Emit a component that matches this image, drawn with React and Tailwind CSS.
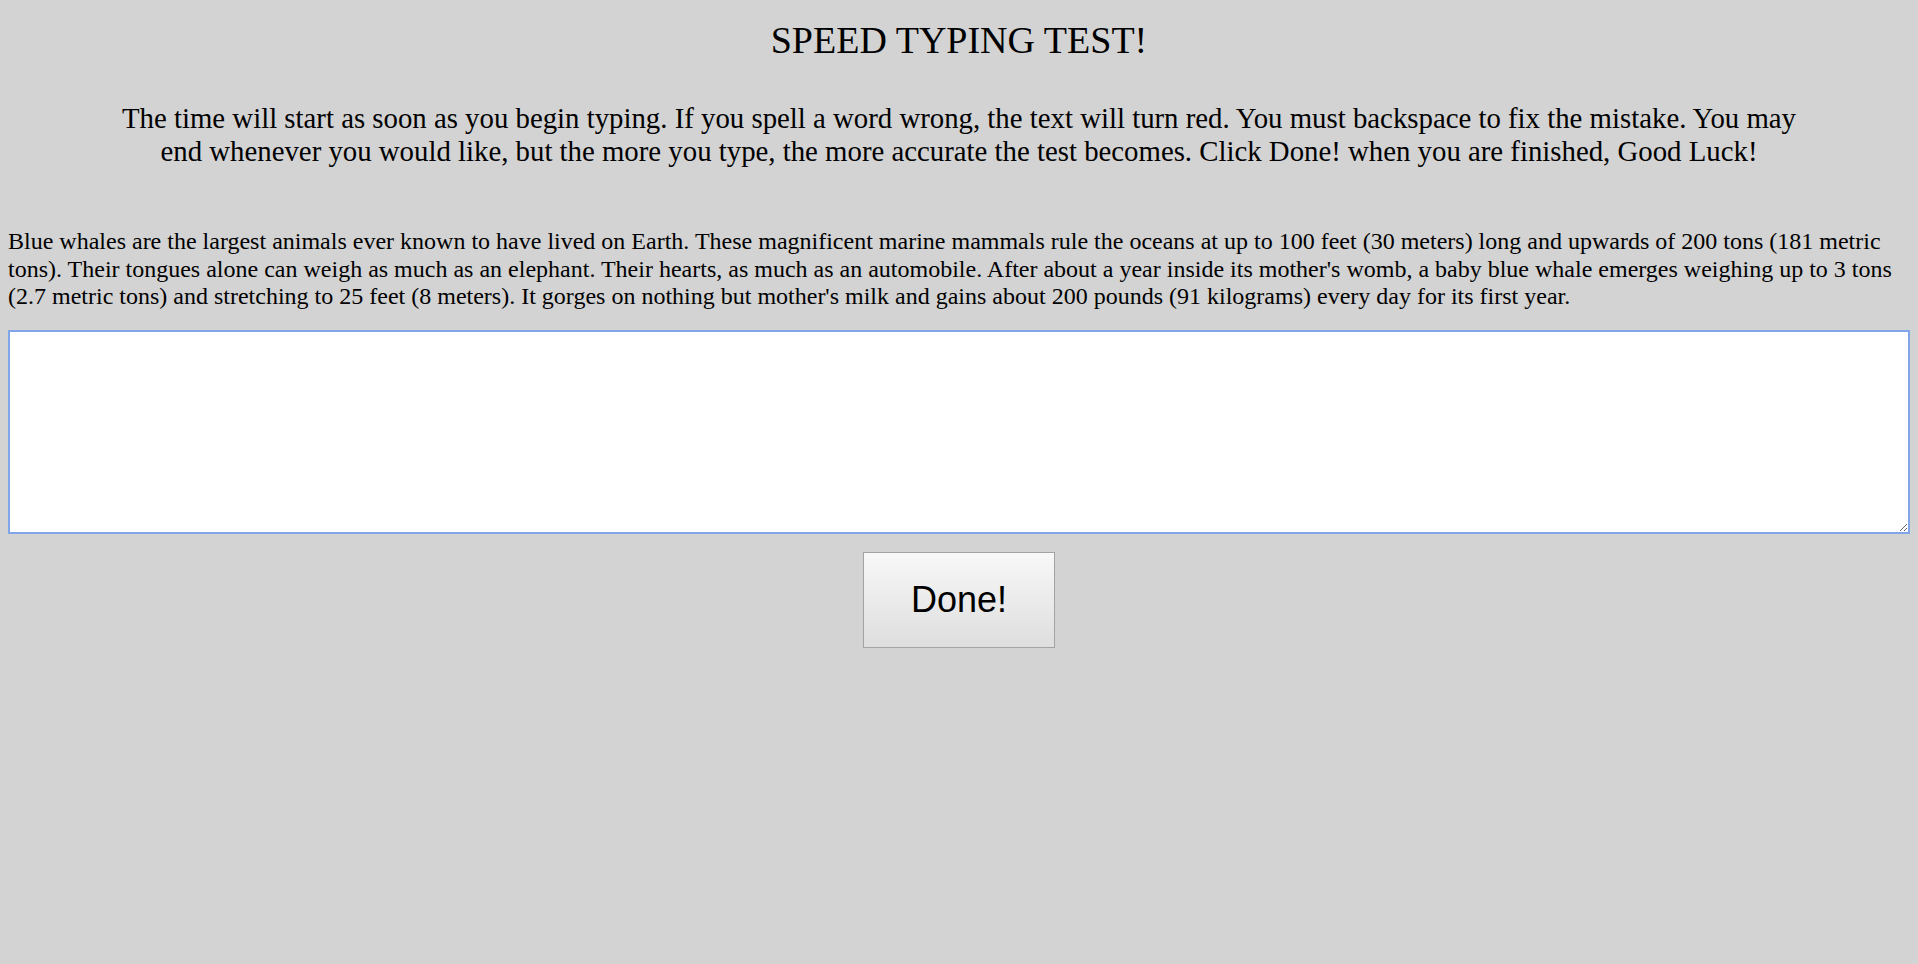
export default function App() {
  return (
    <div className="min-h-screen bg-[#d3d3d3] px-2 pt-[18px] font-['Liberation_Serif',serif] text-black">
      <h1 className="text-center text-[38px] leading-[44px]">SPEED TYPING TEST!</h1>

      <p className="mx-auto mt-[40px] max-w-[1700px] text-center text-[28.8px] leading-[33px]">
        The time will start as soon as you begin typing. If you spell a word wrong, the text will turn red. You must backspace to fix the mistake. You may end whenever you would like, but the more you type, the more accurate the test becomes. Click Done! when you are finished, Good Luck!
      </p>

      <p className="mt-[60px] text-[24px] leading-[27.5px]">
        Blue whales are the largest animals ever known to have lived on Earth. These magnificent marine mammals rule the oceans at up to 100 feet (30 meters) long and upwards of 200 tons (181 metric tons). Their tongues alone can weigh as much as an elephant. Their hearts, as much as an automobile. After about a year inside its mother's womb, a baby blue whale emerges weighing up to 3 tons (2.7 metric tons) and stretching to 25 feet (8 meters). It gorges on nothing but mother's milk and gains about 200 pounds (91 kilograms) every day for its first year.
      </p>

      <textarea
        className="mt-[19px] block h-[204px] w-full resize-y border-2 border-[#7fa6e8] bg-white p-1 text-[24px] outline-none"
        aria-label="Typing area"
      />

      <div className="mt-[18px] flex justify-center">
        <button className="h-[96px] w-[192px] border border-[#a3a3a3] bg-gradient-to-b from-[#f8f8f8] to-[#dedede] font-['Liberation_Sans',Arial,sans-serif] text-[36px]">
          Done!
        </button>
      </div>
    </div>
  )
}
